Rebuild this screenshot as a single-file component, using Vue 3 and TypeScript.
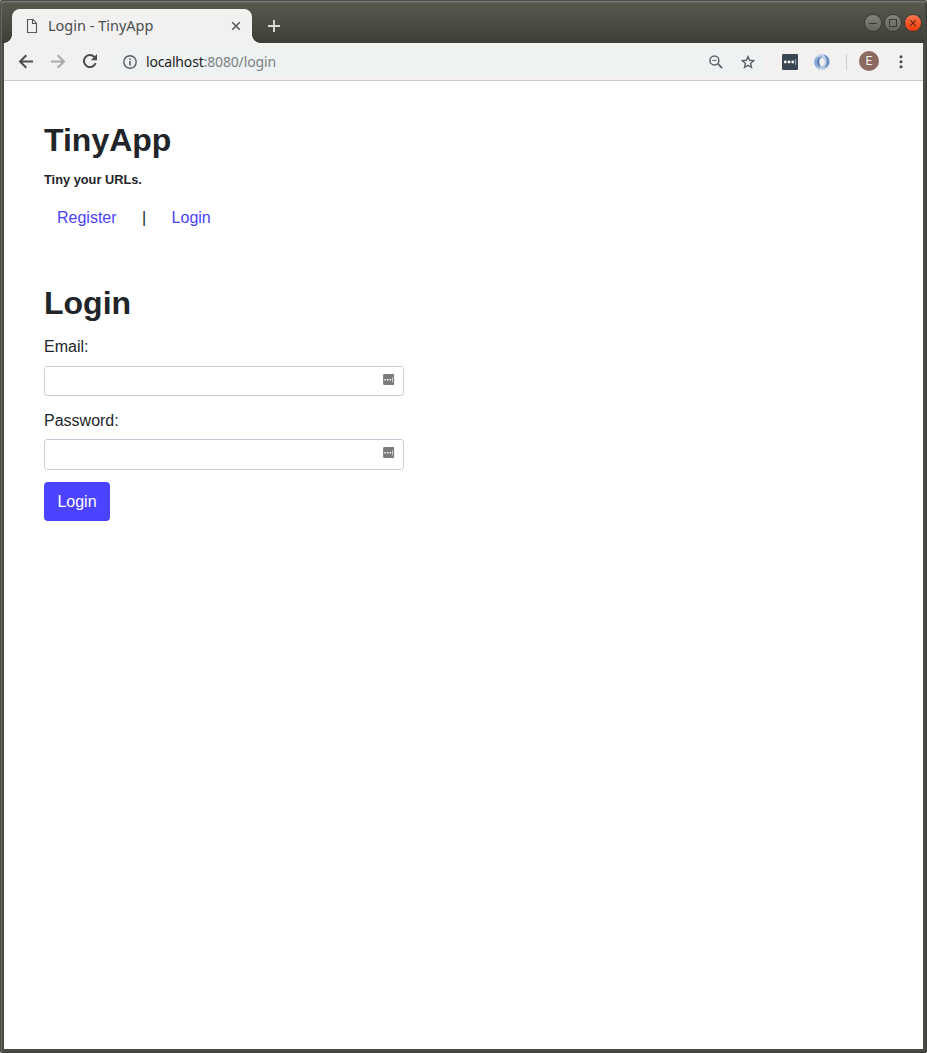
<script setup lang="ts">
import { ref } from 'vue'

interface Field {
  id: string
  label: string
  type: string
}

const fields: Field[] = [
  { id: 'email', label: 'Email:', type: 'email' },
  { id: 'password', label: 'Password:', type: 'password' },
]
const values = ref<Record<string, string>>({ email: '', password: '' })
</script>

<template>
  <div class="window">
    <header class="titlebar">
      <div class="tab">
        <svg class="doc" width="12" height="16" viewBox="0 0 12 16" fill="none" stroke="#555" stroke-width="1.1">
          <path d="M1.5 1.5H7L10.5 5.5V14.5H1.5Z" /><path d="M6.5 1.6V5.5H10.5" />
        </svg>
        <span class="tab-title">Login - TinyApp</span>
        <svg class="tab-close" width="10" height="10" viewBox="0 0 10 10" stroke="#5a5b5c" stroke-width="1.6">
          <path d="M1.2 1.2L8.8 8.8M8.8 1.2L1.2 8.8" />
        </svg>
      </div>
      <svg class="plus" width="12" height="12" viewBox="0 0 12 12" stroke="#dddcd6" stroke-width="1.9"><path d="M6 0V12M0 6H12" /></svg>
      <div class="controls">
        <span class="ctl"><svg width="16" height="16" viewBox="0 0 16 16"><path d="M4 8.5H12" stroke="#3c3b37" /></svg></span>
        <span class="ctl"><svg width="16" height="16" viewBox="0 0 16 16"><rect x="4.5" y="4.5" width="7" height="7" fill="none" stroke="#3c3b37" /></svg></span>
        <span class="ctl ctl-close"><svg width="16" height="16" viewBox="0 0 16 16"><path d="M5.2 5.2L10.8 10.8M10.8 5.2L5.2 10.8" stroke="#6b2a12" stroke-width="1.2" /></svg></span>
      </div>
    </header>

    <nav class="toolbar">
      <svg class="back" width="16" height="16" viewBox="0 0 16 16" fill="none" stroke="#4c4d4f" stroke-width="2"><path d="M15 7.5H2.2M8.3 1.2L2 7.5L8.3 13.8" /></svg>
      <svg class="forward" width="16" height="16" viewBox="0 0 16 16" fill="none" stroke="#aaa9a7" stroke-width="2"><path d="M1 7.5H13.8M7.7 1.2L14 7.5L7.7 13.8" /></svg>
      <svg class="reload" width="16" height="16" viewBox="0 0 16 16" fill="none" stroke="#4c4d4f" stroke-width="2">
        <path d="M13.6 9.2A6 6 0 1 1 12.3 2.9L13 3.6" /><path d="M15 0V6.2H8.8Z" fill="#4c4d4f" stroke="none" />
      </svg>
      <div class="omnibox">
        <svg class="info" width="14" height="14" viewBox="0 0 14 14">
          <circle cx="7" cy="7" r="6.2" fill="none" stroke="#5a5e62" stroke-width="1.4" />
          <path d="M6.2 6.1H7.8V10.5H6.2ZM6.2 3.5H7.8V5H6.2Z" fill="#5a5e62" />
        </svg>
        <span class="url"><b>localhost</b>:8080/login</span>
        <svg class="zoom" width="14" height="14" viewBox="0 0 14 14" fill="none" stroke="#5f6367" stroke-width="1.5">
          <circle cx="5.4" cy="5.4" r="4.5" /><path d="M8.7 8.7L13.2 13.2" stroke-width="1.8" /><path d="M3.2 5.4H7.6" stroke-width="1" />
        </svg>
        <svg class="star" width="14" height="14" viewBox="0 0 14 14" fill="none" stroke="#5f6367" stroke-width="1.4">
          <path d="M7 1.6L8.6 5.3L12.7 5.7L9.6 8.4L10.5 12.4L7 10.3L3.5 12.4L4.4 8.4L1.3 5.7L5.4 5.3Z" />
        </svg>
      </div>
      <svg class="pass" width="16" height="16" viewBox="0 0 16 16">
        <rect width="16" height="16" rx="1.2" fill="#3a4654" />
        <circle cx="3.3" cy="8" r="1.4" fill="#fff" /><circle cx="7" cy="8" r="1.4" fill="#fff" /><circle cx="10.7" cy="8" r="1.4" fill="#fff" />
        <path d="M13.6 5.2V10.8" stroke="#a8afb7" />
      </svg>
      <svg class="ring" width="16" height="16" viewBox="0 0 16 16">
        <path d="M8 0A8 8 0 1 1 8 16A8 8 0 1 1 8 0ZM8 4.2C6.2 4.2 5.2 6 5.4 8.3C5.6 10.4 6.7 11.8 8.2 11.8C10 11.6 10.8 9.8 10.6 7.6C10.4 5.5 9.5 4.2 8 4.2Z" fill="#c0d1e8" fill-rule="evenodd" />
        <path d="M8.6 2.8C5 2 2.8 5 3.2 8.8C3.4 11.6 4.6 13.8 6.6 15C2.4 14.4 .2 11.4 .3 7.8C.6 4.2 3.8 1.6 8.6 2.8Z" fill="#87a6d3" />
        <path d="M9.2 .5C13.5 1.4 15.6 4.6 15.2 8.5C14.7 12.2 11.5 14.5 7.3 13.2C11 13.6 12.9 11.2 12.7 7.4C12.6 4.5 11.4 2.2 9.2 .5Z" fill="#6487bb" />
        <path d="M8.6 2.8C6 3.5 4.9 5.8 5.2 8.6C5.4 11 6.2 12.4 7.3 13.2C4.6 12.8 3.3 10.8 3.2 8.2C3.2 5 5.4 2.8 8.6 2.8Z" fill="#4e74ad" />
      </svg>
      <i class="divider"></i>
      <span class="avatar">E</span>
      <svg class="menu" width="4" height="14" viewBox="0 0 4 14" fill="#46494c"><circle cx="2" cy="1.8" r="1.5" /><circle cx="2" cy="6.8" r="1.5" /><circle cx="2" cy="11.8" r="1.5" /></svg>
    </nav>

    <main class="page">
      <h1>TinyApp</h1>
      <p class="tagline">Tiny your URLs.</p>
      <div class="links"><a>Register</a><span>|</span><a>Login</a></div>
      <h1 class="login-heading">Login</h1>
      <form @submit.prevent>
        <div v-for="f in fields" :key="f.id" class="field">
          <label :for="f.id">{{ f.label }}</label>
          <div class="control" :class="f.id">
            <input :id="f.id" v-model="values[f.id]" :type="f.type" />
            <svg width="12" height="12" viewBox="0 0 12 12">
              <rect x=".1" y="0" width="11" height="11.1" rx="1" fill="#7b7b7b" />
              <path d="M1.4 5H2.8V6.4H1.4ZM4 5H5.4V6.4H4ZM6.6 5H8V6.4H6.6Z" fill="#fff" />
              <path d="M9.5 3.2V8.3" stroke="#d5d5d5" stroke-width=".9" />
            </svg>
          </div>
        </div>
        <button type="submit">Login</button>
      </form>
    </main>
  </div>
</template>

<style>
body { margin: 0; background: #fff; }
</style>

<style scoped>
* { box-sizing: border-box; }
svg { display: block; flex: none; }
.window {
  width: 927px; height: 1053px; overflow: hidden;
  display: flex; flex-direction: column;
  padding: 1px 4px 4px;
  background: #4b4a43;
  border-radius: 3px;
  box-shadow: inset 0 1px #4e4e50, inset 0 2px #77766f, inset 1px 0 #4e4d4b, inset 2px 0 #67665d, inset -1px 0 #3b3b37, inset 0 -1px #3b3b37;
}
.titlebar {
  height: 42px; flex: none; display: flex; align-items: flex-start;
  margin: 0 -2px 0 -2px; padding-left: 10px;
  background: linear-gradient(#77766e 0, #77766e 1px, #59584e 2px, #3e3e38 100%);
}
.tab {
  position: relative; width: 240px; height: 34px; margin-top: 8px;
  display: flex; align-items: center; padding: 0 11px 0 14px;
  background: #f2f1f0; border-radius: 8px 8px 0 0;
}
.tab::before, .tab::after { content: ''; position: absolute; bottom: 0; width: 8px; height: 8px; }
.tab::before { left: -8px; background: radial-gradient(circle at 0 0, transparent 7.5px, #f2f1f0 8px); }
.tab::after { right: -8px; background: radial-gradient(circle at 100% 0, transparent 7.5px, #f2f1f0 8px); }
.tab-title { margin: 0 0 2px 10px; font: 14.5px/20px 'Noto Sans', sans-serif; color: #4a4d50; white-space: nowrap; }
.tab-close { margin-left: auto; }
.plus { margin: 19px 0 0 16px; }
.controls { margin: 14px 4px 0 auto; display: flex; gap: 4px; }
.ctl {
  width: 16px; height: 16px; border-radius: 50%;
  background: linear-gradient(#85847c, #65645c); box-shadow: 0 0 0 1px #3a3934;
}
.ctl-close { background: linear-gradient(#fb7650, #ed3b08); }
.toolbar {
  height: 38px; flex: none; display: flex; align-items: center; padding-left: 14px;
  background: #f2f1f0; border-bottom: 1px solid #cbcac9;
}
.forward { margin-left: 16px; }
.reload { margin-left: 16px; }
.omnibox {
  width: 652px; height: 28px; margin-left: 15px; padding-left: 10px;
  display: flex; align-items: center; border-radius: 14px; background: #eef2f3;
}
.url { margin-left: 9px; width: 131px; font: 14px/20px 'Noto Sans', sans-serif; color: #7b7f82; white-space: nowrap; letter-spacing: -.14px; }
.url b { color: #1c1c1e; font-weight: 400; letter-spacing: -.18px; }
.zoom { margin-left: 432px; }
.star { margin-left: 18px; }
.pass { margin-left: 17px; }
.ring { margin-left: 16px; }
.divider { width: 1px; height: 16px; margin-left: 16px; background: #cccbca; }
.avatar {
  width: 20px; height: 20px; margin: -1px 0 0 12px; border-radius: 50%;
  background: #8d6a61; color: #f5efed; text-align: center; font: 12px/20px Roboto, sans-serif;
}
.menu { margin-left: 20px; }
.page {
  flex: 1; padding: 40px; background: #fff; color: #212529;
  font: 16px/24px 'Liberation Sans', Arial, sans-serif;
}
h1 { margin: 0; font-size: 32px; line-height: 38px; font-weight: 700; }
.tagline { margin: 13px 0 0; font-size: 12.8px; line-height: 15px; font-weight: 700; }
.links { display: flex; margin-top: 19px; padding-left: 13px; color: #4b43fb; }
.links span { width: 55px; text-align: center; color: #212529; }
.login-heading { margin-top: 54px; }
.field { margin-bottom: 12px; }
.field:first-child { padding-top: 12px; }
label { display: block; padding-top: 1px; margin-bottom: -1px; }
.control { position: relative; width: 360px; height: 30px; margin-top: 8px; }
.control.password { height: 31px; margin-top: 7px; }
.control svg { position: absolute; right: 9px; top: 8px; }
input {
  display: block; width: 100%; height: 100%; padding: 4px 8px;
  border: 1px solid #c9cfda; border-radius: 3px; background: #fff; font: inherit;
}
button {
  display: block; width: 66px; height: 39px; padding: 0; border: 0; border-radius: 4px;
  background: #4b43ff; color: #fff; font: inherit;
}
</style>
